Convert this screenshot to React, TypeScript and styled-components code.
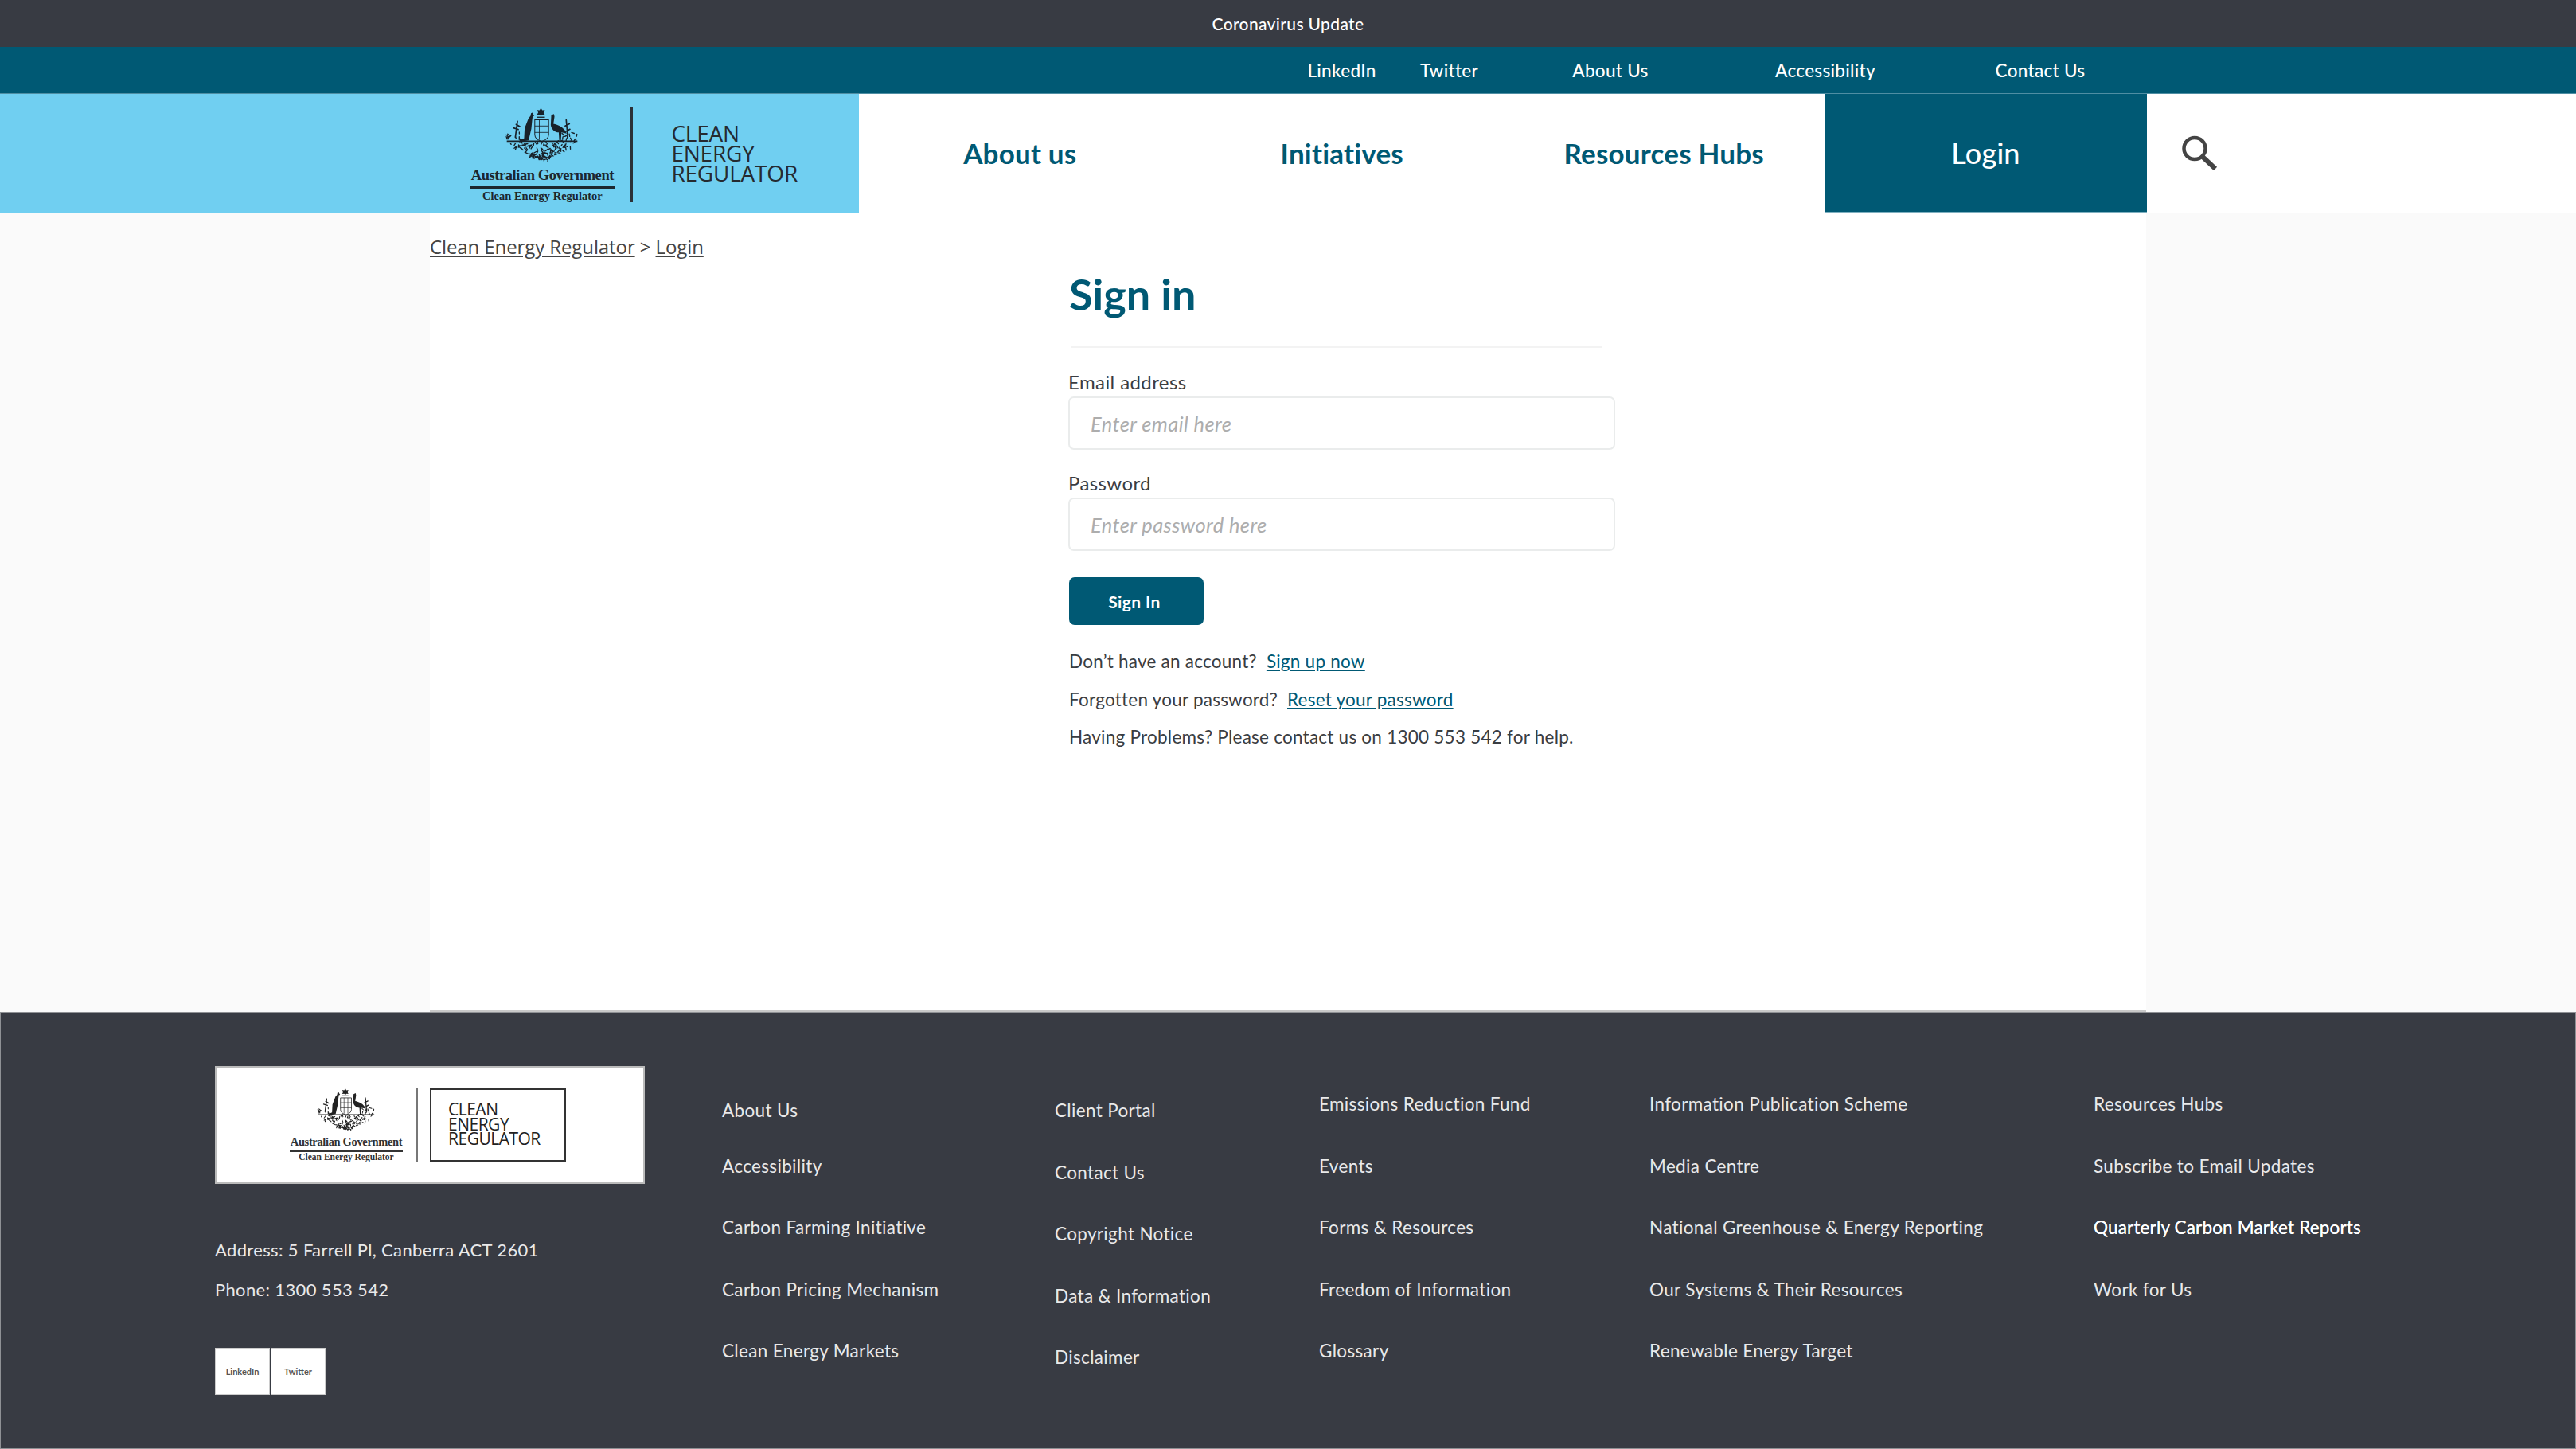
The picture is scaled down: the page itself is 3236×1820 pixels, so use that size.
import React from 'react';
import styled, { createGlobalStyle } from 'styled-components';

const SANS = '"Lato", "Open Sans", "Liberation Sans", sans-serif';
const DARK = '#383b43';
const TEAL = '#005974';

const Global = createGlobalStyle`
  html, body { margin: 0; padding: 0; background: #fafafa; }
  body { font-family: ${SANS}; width: 3236px; }
  * { box-sizing: border-box; }
  a { color: inherit; text-decoration: none; }
`;

const Page = styled.div`width: 3236px; height: 1820px; display: flex; flex-direction: column; overflow: hidden;`;

const Notice = styled.div`
  height: 59px; background: ${DARK}; color: #fff; display: flex; align-items: center; justify-content: center;
  font-size: 21px; font-weight: 500; letter-spacing: .35px;
`;

const UtilityBar = styled.nav`
  height: 59px; background: ${TEAL}; border-bottom: 1px solid #4f8ea3; padding-left: 1618px;
  display: grid; grid-template-columns: 135px 135px 270px 270px 270px; align-items: center;
  color: #fff; font-size: 22.5px; font-weight: 500; letter-spacing: .3px;
`;
const UtilityLink = styled.a`text-align: center;`;

const NavRow = styled.header`height: 150px; display: grid; grid-template-columns: 1079px 404.5px 404.5px 404.5px 404px 1fr; background: #fff;`;
const LogoPanel = styled.div`background: #70cff1; display: flex; justify-content: flex-end; padding-right: 77px; border-bottom: 1px solid #b5e4f5;`;
const NavItem = styled.a`
  display: flex; align-items: center; justify-content: center;
  font-size: 35px; font-weight: 700; color: ${TEAL}; height: 148px; letter-spacing: .2px;
`;
const LoginItem = styled(NavItem)`background: ${TEAL}; color: #fff; font-weight: 500; font-size: 36px; border-bottom: 1px solid #7fb0c0; height: 149px;`;
const SearchCell = styled.div`display: flex; align-items: center; padding: 0 0 2px 43px;`;

/* Logo */
const LogoWrap = styled.div<{ $small?: boolean }>`
  display: flex; align-items: flex-start;
  padding-top: ${p => (p.$small ? 0 : 17)}px;
`;
const GovBlock = styled.div<{ $small?: boolean }>`
  width: ${p => (p.$small ? 142 : 182)}px;
  display: flex; flex-direction: column; align-items: center;
  color: ${p => (p.$small ? '#333' : '#1c2730')};
  font-family: "Liberation Serif", serif; font-weight: 700;
`;
const GovName = styled.div<{ $small?: boolean }>`
  width: 100%; text-align: center; white-space: nowrap; border-bottom: ${p => (p.$small ? 2 : 3)}px solid currentColor;
  font-size: ${p => (p.$small ? 14.5 : 18.5)}px; line-height: ${p => (p.$small ? 20 : 25)}px;
  padding-bottom: 1px; letter-spacing: ${p => (p.$small ? -.35 : -.45)}px;
  margin-top: ${p => (p.$small ? 4 : 5)}px;
`;
const GovSub = styled.div<{ $small?: boolean }>`
  font-size: ${p => (p.$small ? 11.5 : 14.5)}px; line-height: ${p => (p.$small ? 13 : 18)}px; white-space: nowrap;
`;
const Divider = styled.div<{ $small?: boolean }>`
  width: 3px; height: ${p => (p.$small ? 92 : 119)}px;
  margin-left: ${p => (p.$small ? 16 : 20)}px; background: ${p => (p.$small ? '#777' : '#2b3138')};
`;
const Wordmark = styled.div<{ $small?: boolean }>`
  font-family: "Open Sans", sans-serif; font-weight: 400; color: ${p => (p.$small ? '#222' : '#252a30')};
  font-size: ${p => (p.$small ? 21 : 28)}px; line-height: ${p => (p.$small ? 18.5 : 25)}px;
  letter-spacing: ${p => (p.$small ? -.5 : -.2)}px;
  margin-left: ${p => (p.$small ? 15 : 48)}px;
  padding: ${p => (p.$small ? '15px 0 0 21px' : '20px 0 0')};
  ${p => p.$small ? 'border: 2px solid #333; width: 171px; height: 92px;' : ''}
`;

function leaves() {
  const out: string[] = [];
  let s = 7;
  const r = () => { s = (s * 16807) % 2147483647; return (s % 1000) / 1000; };
  for (let i = 0; i < 190; i++) {
    const y = 95 + r() * 100;
    const spread = y < 130 ? 135 : 135 - (y - 130) * 1.7;
    const x = 137 + (r() * 2 - 1) * spread;
    if (y < 125 && Math.abs(x - 137) < 75) continue;
    const a = r() * 6.28, l = 5 + r() * 6;
    out.push(`M${x.toFixed(1)} ${y.toFixed(1)}l${(Math.cos(a) * l).toFixed(1)} ${(Math.sin(a) * l).toFixed(1)}`);
  }
  return out.join('');
}
const LEAVES = leaves();

const Crest = ({ w, h, color }: { w: number; h: number; color: string }) => (
  <svg width={w} height={h} viewBox="0 0 275 200" style={{ display: 'block' }}>
    <g fill={color} stroke="none">
      <path d="M133 0l5 9 10-1-5 9 5 9-10-1-5 6-5-6-10 1 5-9-5-9 10 1z" />
      <rect x="118" y="33" width="30" height="4" />
      <path d="M96 20l5-2 3 6 4 6-6 2-2 16-3 30-10 44-30 5-5-5 18-8 2-38 14-36 8-10z" />
      <path d="M172 27l10-4 2 10-4 27c15 2 42 14 50 36l-20-4-2 33h-6l-2-33c-15 0-28-12-30-28z" />
    </g>
    <g fill="none" stroke={color}>
      <path d="M110 45h52v55c0 14-14 22-26 26-12-4-26-12-26-26z" strokeWidth="3" />
      <path d="M110 68h52M110 92h52M127 45v75M145 45v75" strokeWidth="2.5" />
      <path d="M5 125h265" strokeWidth="5" />
      <path d={LEAVES} strokeWidth="4" strokeLinecap="round" />
      <path d="M45 50l-8 60M228 45l6 65M30 75l18 6M40 62l14 8M224 68l16-8M228 88l14-8" strokeWidth="5" strokeLinecap="round" />
    </g>
  </svg>
);

const Logo = ({ small }: { small?: boolean }) => (
  <LogoWrap $small={small}>
    <GovBlock $small={small}>
      <Crest w={small ? 74 : 92} h={small ? 53 : 68} color={small ? '#222' : '#18222a'} />
      <GovName $small={small}>Australian Government</GovName>
      <GovSub $small={small}>Clean Energy Regulator</GovSub>
    </GovBlock>
    <Divider $small={small} />
    <Wordmark $small={small}>CLEAN<br />ENERGY<br />REGULATOR</Wordmark>
  </LogoWrap>
);

/* Main */
const Main = styled.main`height: 1003px; margin: 0 540px; background: #fff; border-bottom: 2px solid #c9c9c9;`;
const Breadcrumb = styled.div`
  padding-top: 24px; font-family: "Open Sans", sans-serif; font-size: 24px; line-height: 36px; color: #444; letter-spacing: -.1px;
  a { text-decoration: underline; }
`;
const Form = styled.form`margin: 0 0 0 802px; width: 687px;`;
const Title = styled.h1`
  margin: 0; padding: 10px 0 0 1px; font-size: 54px; line-height: 64px; font-weight: 700; color: ${TEAL};
`;
const Rule = styled.div`height: 3px; width: 667px; margin: 32px 0 0 4px; background: #f3f3f3;`;
const Label = styled.label`display: block; font-size: 24px; line-height: 30px; color: #3a3d42; margin-top: 28px; letter-spacing: .4px;`;
const InputBox = styled.input`
  display: block; width: 687px; height: 67px; margin-top: 3px; padding: 0 26px; background: #fff;
  border: 2px solid #eaecec; border-radius: 7px; font-family: ${SANS}; font-size: 25.5px; outline: none; letter-spacing: .4px;
  &::placeholder { color: #adadad; font-style: italic; opacity: 1; }
`;
const PasswordLabel = styled(Label)`margin-top: 27px;`;
const SubmitButton = styled.button`
  display: block; width: 169px; height: 60px; margin: 33px 0 0 1px; padding: 0 5px 0 0; border: 0; border-radius: 7px;
  background: ${TEAL}; color: #fff; font-family: ${SANS}; font-size: 21px; font-weight: 700; letter-spacing: .4px;
`;
const HelpLines = styled.div`margin: 22px 0 0 1px;`;
const HelpLine = styled.p`
  margin: 0; height: 47.5px; line-height: 47.5px; font-size: 22.5px; color: #3a3d42; white-space: nowrap; letter-spacing: .24px;
  a { color: ${TEAL}; text-decoration: underline; margin-left: 6px; }
`;

/* Footer */
const Footer = styled.footer`
  flex: 1; background: ${DARK}; color: #e9e9ea; padding: 67px 0 0 269px;
  border: 1px solid #8f9195;
  display: grid; grid-template-columns: 637px 418px 332px 415px 558px 1fr; align-items: start;
`;
const Brand = styled.div`width: 540px;`;
const LogoCard = styled.div`
  height: 148px; background: #fff; border: 2px solid #bbb; padding: 26px 0 0 92px;
`;
const AddressLines = styled.div`margin-top: 58px;`;
const AddressLine = styled.p`margin: 0; height: 50px; line-height: 50px; font-size: 22px; letter-spacing: .35px; white-space: nowrap;`;
const Socials = styled.div`display: flex; gap: 1px; margin-top: 48px;`;
const SocialBox = styled.a`
  width: 69px; height: 59px; background: #fff; border: 1px solid #ccc; color: #555;
  display: flex; align-items: center; justify-content: center; font-size: 11px; font-weight: 700;
`;
const LinkColumn = styled.ul<{ $offset: number }>`
  list-style: none; margin: ${p => p.$offset}px 0 0; padding: 0;
`;
const LinkRow = styled.li<{ $nudge?: boolean; $bright?: boolean }>`
  height: 77.5px; display: flex; align-items: center; white-space: nowrap;
  font-size: 22.5px; letter-spacing: ${p => (p.$bright ? .16 : .34)}px;
  padding-top: ${p => (p.$nudge ? 16 : 0)}px;
  color: ${p => (p.$bright ? '#fff' : '#e9e9ea')};
  text-shadow: ${p => (p.$bright ? '0 0 .6px #fff' : 'none')};
`;

const columns: { offset: number; items: string[] }[] = [
  { offset: 9, items: ['About Us', 'Accessibility', 'Carbon Farming Initiative', 'Carbon Pricing Mechanism', 'Clean Energy Markets'] },
  { offset: 17, items: ['Client Portal', 'Contact Us', 'Copyright Notice', 'Data & Information', 'Disclaimer'] },
  { offset: 9, items: ['Emissions Reduction Fund', 'Events', 'Forms & Resources', 'Freedom of Information', 'Glossary'] },
  { offset: 9, items: ['Information Publication Scheme', 'Media Centre', 'National Greenhouse & Energy Reporting', 'Our Systems & Their Resources', 'Renewable Energy Target'] },
  { offset: 9, items: ['Resources Hubs', 'Subscribe to Email Updates', 'Quarterly Carbon Market Reports', 'Work for Us'] },
];

export default function App() {
  return (
    <Page>
      <Global />
      <Notice>Coronavirus Update</Notice>
      <UtilityBar>
        {['LinkedIn', 'Twitter', 'About Us', 'Accessibility', 'Contact Us'].map(t => <UtilityLink key={t} href="#">{t}</UtilityLink>)}
      </UtilityBar>
      <NavRow>
        <LogoPanel><Logo /></LogoPanel>
        <NavItem href="#">About us</NavItem>
        <NavItem href="#">Initiatives</NavItem>
        <NavItem href="#">Resources Hubs</NavItem>
        <LoginItem href="#">Login</LoginItem>
        <SearchCell>
          <svg width="46" height="44" viewBox="0 0 46 44" fill="none" stroke="#444" strokeWidth="4.5">
            <circle cx="17" cy="16.5" r="13.5" />
            <path d="M27 27l16 15" strokeWidth="6" />
          </svg>
        </SearchCell>
      </NavRow>
      <Main>
        <Breadcrumb><a href="#">Clean Energy Regulator</a> &gt; <a href="#">Login</a></Breadcrumb>
        <Form onSubmit={e => e.preventDefault()}>
          <Title>Sign in</Title>
          <Rule />
          <Label>Email address</Label>
          <InputBox placeholder="Enter email here" />
          <PasswordLabel>Password</PasswordLabel>
          <InputBox placeholder="Enter password here" />
          <SubmitButton>Sign In</SubmitButton>
          <HelpLines>
            <HelpLine>Don’t have an account? <a href="#">Sign up now</a></HelpLine>
            <HelpLine>Forgotten your password? <a href="#">Reset your password</a></HelpLine>
            <HelpLine>Having Problems? Please contact us on 1300 553 542 for help.</HelpLine>
          </HelpLines>
        </Form>
      </Main>
      <Footer>
        <Brand>
          <LogoCard><Logo small /></LogoCard>
          <AddressLines>
            <AddressLine>Address: 5 Farrell Pl, Canberra ACT 2601</AddressLine>
            <AddressLine>Phone: 1300 553 542</AddressLine>
          </AddressLines>
          <Socials>
            <SocialBox href="#">LinkedIn</SocialBox>
            <SocialBox href="#">Twitter</SocialBox>
          </Socials>
        </Brand>
        {columns.map((c, ci) => (
          <LinkColumn key={ci} $offset={c.offset}>
            {c.items.map((t, i) => (
              <LinkRow key={t} $nudge={ci === 0 && i === 0} $bright={t.startsWith('Quarterly')}>{t}</LinkRow>
            ))}
          </LinkColumn>
        ))}
      </Footer>
    </Page>
  );
}
